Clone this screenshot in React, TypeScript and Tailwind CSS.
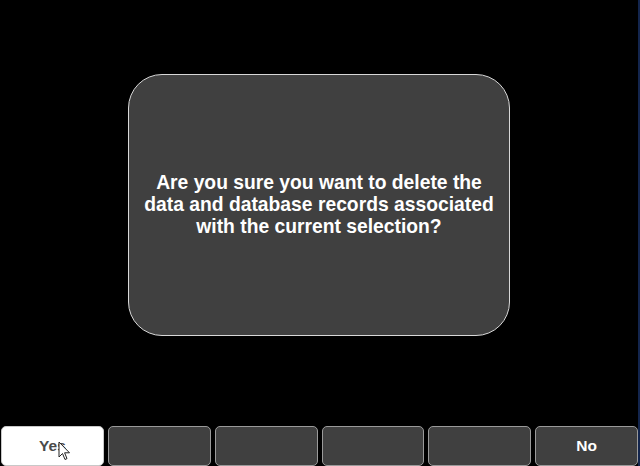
const buttons = ["Yes", "", "", "", "", "No"];

function Cursor() {
  return (
    <svg
      className="absolute left-[58px] top-[441px]"
      width="13"
      height="21"
      viewBox="0 0 13 21"
    >
      <path
        d="M1 1 L1 16 L4.5 12.5 L7 18.5 L9 17.6 L6.6 11.8 L11.5 11.8 Z"
        fill="#ffffff"
        stroke="#222222"
        strokeWidth="1"
        strokeLinejoin="round"
      />
    </svg>
  );
}

export default function App() {
  return (
    <div
      className="relative h-[466px] w-[640px] overflow-hidden bg-black border-r-2 border-[#13254d] flex flex-col"
      style={{ fontFamily: '"Liberation Sans", Arial, sans-serif' }}
    >
      <div className="pt-[74px] pl-[128px]">
        <div className="w-[382px] h-[262px] rounded-[34px] border border-[#d8d8d8] bg-[#404040] flex items-center justify-center">
          <p className="text-white font-bold text-[19.3px] leading-[22px] text-center">
            Are you sure you want to delete the
            <br />
            data and database records associated
            <br />
            with the current selection?
          </p>
        </div>
      </div>

      <div className="mt-auto h-[40px] grid grid-cols-6 gap-[4px] pl-[1px]">
        {buttons.map((label, i) => (
          <button
            key={i}
            className={`rounded-[5px] border text-[15.5px] font-bold flex items-center justify-center ${
              label === "Yes"
                ? "bg-white border-[#c8c8c8] text-[#4a4a4a]"
                : "bg-[#404040] border-[#9a9a9a] text-white"
            }`}
          >
            {label}
          </button>
        ))}
      </div>

      <Cursor />
    </div>
  );
}
